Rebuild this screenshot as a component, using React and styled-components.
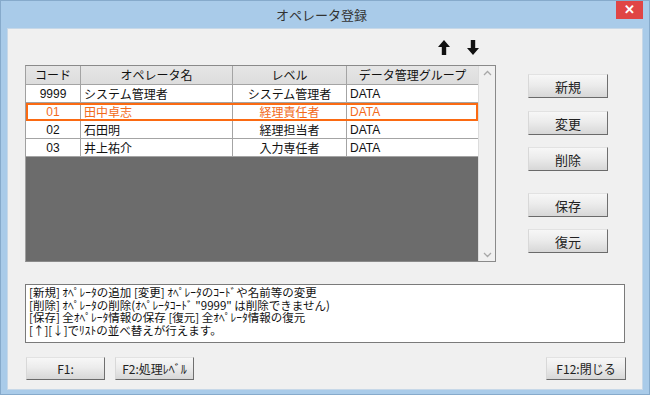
import React from 'react';
import styled, { createGlobalStyle } from 'styled-components';

const GlobalStyle = createGlobalStyle`
  html, body {
    margin: 0;
    padding: 0;
    background: #a9cbe9;
  }
  body {
    font-family: "Liberation Sans", "Noto Sans CJK JP", sans-serif;
  }
`;

const uiFont = `"Liberation Sans", "Noto Sans CJK JP", sans-serif`;

const StyledWindow = styled.div`
  width: 650px;
  height: 395px;
  box-sizing: border-box;
  background: #a9cbe9;
  border: 1px solid #86aacb;
  display: flex;
  flex-direction: column;
  padding: 0 6px 4px 6px;
  overflow: hidden;
`;

const StyledTitleBar = styled.div`
  height: 27px;
  display: flex;
  align-items: flex-start;
`;

const StyledTitle = styled.div`
  flex: 1;
  text-align: center;
  font-family: "Noto Sans CJK JP", sans-serif;
  font-size: 13px;
  color: #333;
  line-height: 27px;
  padding-left: 20px;
`;

const StyledClose = styled.div`
  width: 27px;
  height: 19px;
  background: #e04545;
  color: #fff;
  font-family: ${uiFont};
  font-size: 13px;
  font-weight: bold;
  line-height: 19px;
  text-align: center;
  margin-top: -1px;
`;

const StyledClient = styled.div`
  flex: 1;
  background: #f0f0f0;
  border: 1px solid #c7d8e8;
  padding: 11px 0 0 17px;
  display: flex;
  flex-direction: column;
`;

const StyledTop = styled.div`
  display: flex;
  align-items: flex-start;
`;

const StyledLeft = styled.div`
  width: 471px;
  display: flex;
  flex-direction: column;
`;

const StyledArrowBar = styled.div`
  height: 25px;
  display: flex;
  justify-content: flex-end;
  align-items: flex-start;
  gap: 17px;
  padding-right: 17px;
`;

const StyledList = styled.div`
  height: 197px;
  box-sizing: border-box;
  border: 1px solid #8a8a8a;
  border-left-color: #a0a0a0;
  display: flex;
  background: #6c6c6c;
`;

const StyledTable = styled.div`
  flex: 1;
  display: flex;
  flex-direction: column;
`;

const cols = '55px 152px 114px 1fr';

const StyledRow = styled.div`
  display: grid;
  grid-template-columns: ${cols};
  height: ${({ $header }) => ($header ? '19px' : '18px')};
  box-sizing: border-box;
  background: ${({ $header }) => ($header ? 'linear-gradient(#e6e6e6, #dcdcdc)' : '#fff')};
  color: ${({ $selected }) => ($selected ? '#f26a1b' : '#111')};
  outline: ${({ $selected }) => ($selected ? '2px solid #fb6a12' : 'none')};
  outline-offset: -2px;
  font-family: ${uiFont};
  font-size: 12px;
`;

const StyledCell = styled.div`
  border-right: 1px solid #a4a4a4;
  border-bottom: 1px solid #a4a4a4;
  line-height: ${({ $header }) => ($header ? '18px' : '18px')};
  text-align: ${({ $align }) => $align || 'left'};
  padding-left: ${({ $align }) => ($align === 'left' ? '3px' : '0')};
  white-space: nowrap;
  overflow: hidden;
  font-family: ${({ $cjk }) => ($cjk ? '"Noto Sans CJK JP", sans-serif' : uiFont)};
  &:last-child {
    border-right: none;
  }
`;

const StyledScrollbar = styled.div`
  width: 16px;
  background: #f0f0f0;
  border-left: 1px solid #dcdcdc;
  display: flex;
  flex-direction: column;
  justify-content: space-between;
  align-items: center;
  padding: 4px 0 3px;
`;

const StyledButtonCol = styled.div`
  display: flex;
  flex-direction: column;
  margin-left: 32px;
  padding-top: 34px;
`;

const StyledButton = styled.button`
  width: ${({ $width }) => $width || '80px'};
  height: ${({ $height }) => $height || '24px'};
  margin-top: ${({ $gap }) => $gap || '0'};
  box-sizing: border-box;
  background: linear-gradient(#f7f7f7, #ececec 45%, #d7d7d7);
  border: 1px solid;
  border-color: #e2e2e2 #6f6f6f #6a6a6a #d8d8d8;
  font-family: "Noto Sans CJK JP", sans-serif;
  font-size: ${({ $small }) => ($small ? '12px' : '13px')};
  color: #222;
  padding: 0;
  text-align: center;
  cursor: pointer;
`;

const StyledHelp = styled.div`
  width: 600px;
  height: 59px;
  box-sizing: border-box;
  margin-top: 22px;
  background: #fff;
  border: 1px solid #7a7a7a;
  padding: 1px 3px;
  font-family: "Noto Sans CJK JP", sans-serif;
  font-size: 11.5px;
  line-height: 12.5px;
  color: #111;
  white-space: pre;
`;

const StyledFooter = styled.div`
  display: flex;
  gap: 10px;
  margin-top: 14px;
  padding-left: 1px;
  width: 600px;
`;

const StyledSpacer = styled.div`
  flex: 1;
`;

const Arrow = ({ down }) => (
  <svg width="12" height="15" viewBox="0 0 12 15">
    <path
      d="M6 0 L12 7 L8.2 7 L8.2 15 L3.8 15 L3.8 7 L0 7 Z"
      fill="#111"
      transform={down ? 'rotate(180 6 7.5)' : undefined}
    />
  </svg>
);

const Chevron = ({ down }) => (
  <svg width="9" height="6" viewBox="0 0 9 6">
    <path
      d={down ? 'M1 1 L4.5 4.5 L8 1' : 'M1 5 L4.5 1.5 L8 5'}
      fill="none"
      stroke="#a8a8a8"
      strokeWidth="1.3"
    />
  </svg>
);

const rows = [
  { code: '9999', name: 'システム管理者', level: 'システム管理者', group: 'DATA' },
  { code: '01', name: '田中卓志', level: '経理責任者', group: 'DATA', selected: true },
  { code: '02', name: '石田明', level: '経理担当者', group: 'DATA' },
  { code: '03', name: '井上祐介', level: '入力専任者', group: 'DATA' },
];

const helpText = [
  '[新規] ｵﾍﾟﾚｰﾀの追加 [変更] ｵﾍﾟﾚｰﾀのｺｰﾄﾞや名前等の変更',
  '[削除] ｵﾍﾟﾚｰﾀの削除(ｵﾍﾟﾚｰﾀｺｰﾄﾞ "9999" は削除できません)',
  '[保存] 全ｵﾍﾟﾚｰﾀ情報の保存 [復元] 全ｵﾍﾟﾚｰﾀ情報の復元',
  '[↑][↓]でﾘｽﾄの並べ替えが行えます。',
].join('\n');

const App = () => (
  <>
    <GlobalStyle />
    <StyledWindow>
      <StyledTitleBar>
        <StyledTitle>オペレータ登録</StyledTitle>
        <StyledClose>✕</StyledClose>
      </StyledTitleBar>
      <StyledClient>
        <StyledTop>
          <StyledLeft>
            <StyledArrowBar>
              <Arrow />
              <Arrow down />
            </StyledArrowBar>
            <StyledList>
              <StyledTable>
                <StyledRow $header>
                  <StyledCell $header $align="center" $cjk>コード</StyledCell>
                  <StyledCell $header $align="center" $cjk>オペレータ名</StyledCell>
                  <StyledCell $header $align="center" $cjk>レベル</StyledCell>
                  <StyledCell $header $align="center" $cjk>データ管理グループ</StyledCell>
                </StyledRow>
                {rows.map((r) => (
                  <StyledRow key={r.code} $selected={r.selected}>
                    <StyledCell $align="center">{r.code}</StyledCell>
                    <StyledCell $align="left" $cjk>{r.name}</StyledCell>
                    <StyledCell $align="center" $cjk>{r.level}</StyledCell>
                    <StyledCell $align="left">{r.group}</StyledCell>
                  </StyledRow>
                ))}
              </StyledTable>
              <StyledScrollbar>
                <Chevron />
                <Chevron down />
              </StyledScrollbar>
            </StyledList>
          </StyledLeft>
          <StyledButtonCol>
            <StyledButton>新規</StyledButton>
            <StyledButton $gap="13px">変更</StyledButton>
            <StyledButton $gap="12px">削除</StyledButton>
            <StyledButton $gap="22px">保存</StyledButton>
            <StyledButton $gap="12px">復元</StyledButton>
          </StyledButtonCol>
        </StyledTop>
        <StyledHelp>{helpText}</StyledHelp>
        <StyledFooter>
          <StyledButton $small $width="79px" $height="23px">F1:</StyledButton>
          <StyledButton $small $width="79px" $height="23px">F2:処理ﾚﾍﾞﾙ</StyledButton>
          <StyledSpacer />
          <StyledButton $small $width="80px" $height="23px">F12:閉じる</StyledButton>
        </StyledFooter>
      </StyledClient>
    </StyledWindow>
  </>
);

export default App;
